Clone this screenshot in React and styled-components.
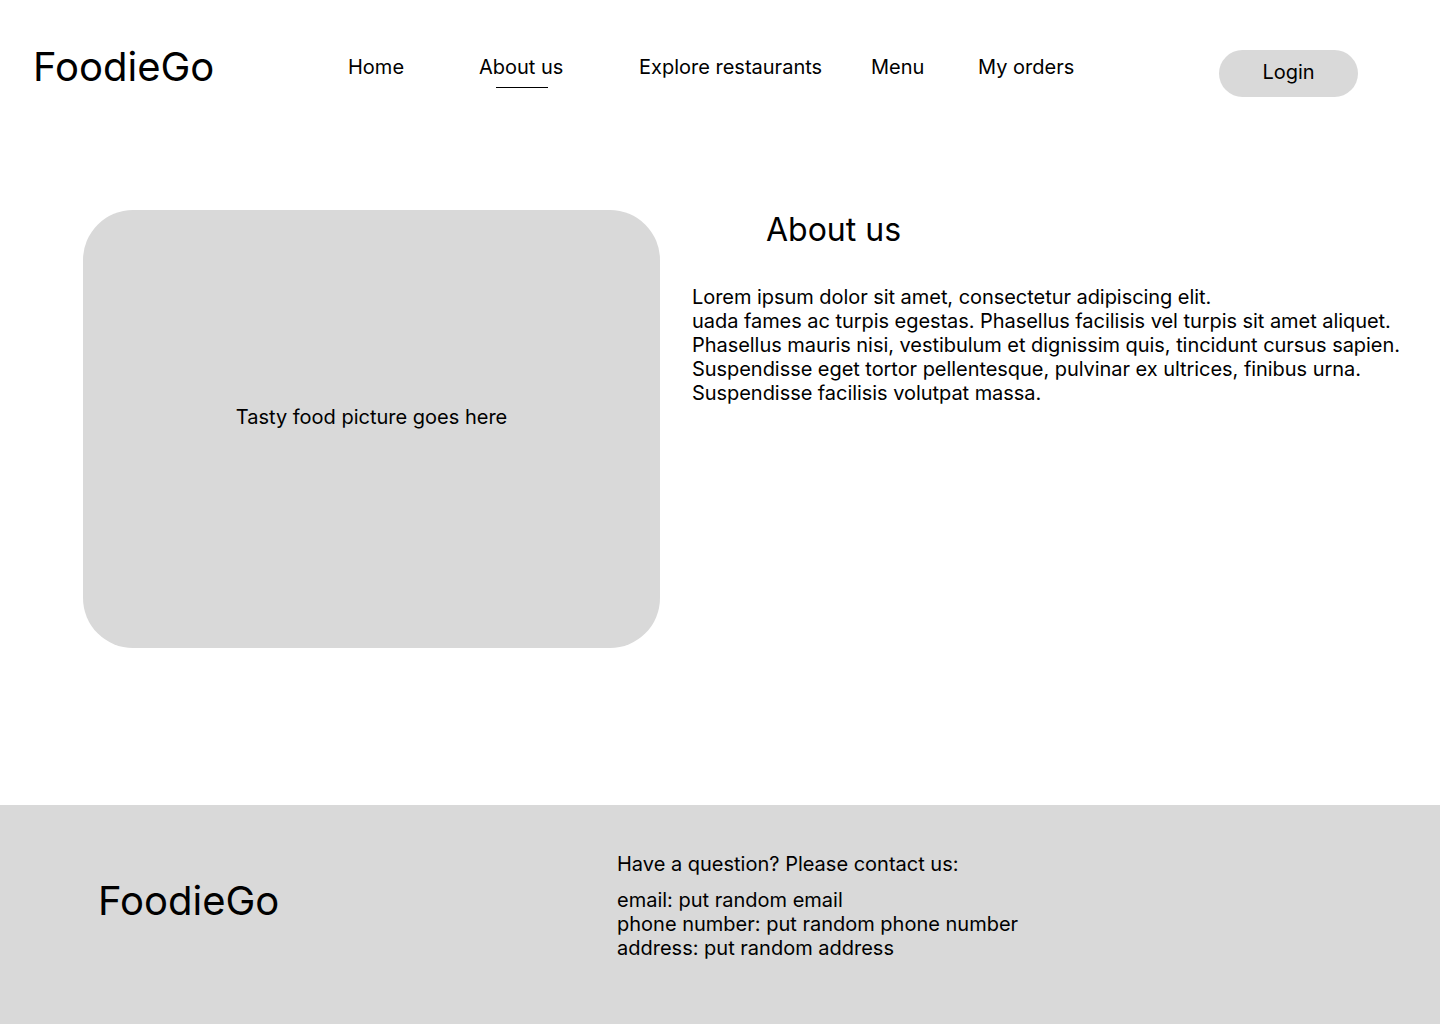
import React from 'react';
import styled, { createGlobalStyle } from 'styled-components';

const GlobalStyle = createGlobalStyle`
    body {
        margin: 0;
        background: #ffffff;
        font-family: Inter, "Noto Sans", sans-serif;
        color: #000000;
    }
`;

const navLinks = [
    { label: "Home", width: 131 },
    { label: "About us", width: 160, active: true },
    { label: "Explore restaurants", width: 232 },
    { label: "Menu", width: 107 },
    { label: "My orders", width: 241 },
];

export default function App() {
    return (
        <Page>
            <GlobalStyle />
            <Header>
                <Logo>FoodieGo</Logo>
                <Nav>
                    {navLinks.map((link) => (
                        <NavItem key={link.label} $w={link.width}>
                            <NavLink $active={link.active}>{link.label}</NavLink>
                        </NavItem>
                    ))}
                </Nav>
                <LoginButton>Login</LoginButton>
            </Header>
            <Main>
                <Picture>Tasty food picture goes here</Picture>
                <AboutColumn>
                    <Heading>About us</Heading>
                    <Paragraph>
                        Lorem ipsum dolor sit amet, consectetur adipiscing elit.<br />
                        uada fames ac turpis egestas. Phasellus facilisis vel turpis sit amet aliquet.<br />
                        Phasellus mauris nisi, vestibulum et dignissim quis, tincidunt cursus sapien.<br />
                        Suspendisse eget tortor pellentesque, pulvinar ex ultrices, finibus urna.<br />
                        Suspendisse facilisis volutpat massa.
                    </Paragraph>
                </AboutColumn>
            </Main>
            <Footer>
                <FooterLogo>FoodieGo</FooterLogo>
                <Contact>
                    <ContactTitle>Have a question? Please contact us:</ContactTitle>
                    <ContactLines>
                        email: put random email<br />
                        phone number: put random phone number<br />
                        address: put random address
                    </ContactLines>
                </Contact>
            </Footer>
        </Page>
    );
};

const Page = styled.div`
    width: 1440px;
    min-height: 1024px;
    display: flex;
    flex-direction: column;
`;

const Header = styled.header`
    display: flex;
    align-items: flex-start;
    height: 134px;
    padding: 43px 0 0 33px;
    box-sizing: border-box;
`;

const Logo = styled.div`
    font-size: 40px;
    line-height: 48px;
    width: 315px;
`;

const Nav = styled.nav`
    display: flex;
    margin-top: 12px;
`;

const NavItem = styled.div`
    width: ${(p) => p.$w}px;
`;

const NavLink = styled.span`
    position: relative;
    display: inline-block;
    font-size: 20px;
    line-height: 24px;
    &::after {
        content: "";
        display: ${(p) => (p.$active ? 'block' : 'none')};
        position: absolute;
        left: 50%;
        top: 32px;
        width: 52px;
        height: 1px;
        margin-left: -25px;
        background: #000000;
    }
`;

const LoginButton = styled.button`
    margin-top: 7px;
    width: 139px;
    height: 47px;
    border: none;
    border-radius: 24px;
    background: #d9d9d9;
    font-family: Inter, sans-serif;
    font-size: 20px;
    line-height: 24px;
    color: #000000;
    padding: 0 0 3px;
`;

const Main = styled.main`
    display: flex;
    gap: 32px;
    padding: 76px 0 0 83px;
    height: 671px;
    box-sizing: border-box;
`;

const Picture = styled.div`
    width: 577px;
    height: 438px;
    border-radius: 50px;
    background: #d9d9d9;
    display: flex;
    align-items: center;
    justify-content: center;
    font-size: 20px;
    line-height: 24px;
    padding-bottom: 24px;
    box-sizing: border-box;
    flex-shrink: 0;
`;

const AboutColumn = styled.section`
    display: flex;
    flex-direction: column;
`;

const Heading = styled.h1`
    margin: 0 0 35px 74px;
    font-size: 32px;
    line-height: 40px;
    font-weight: 400;
`;

const Paragraph = styled.p`
    margin: 0;
    font-size: 20px;
    line-height: 24px;
    letter-spacing: -0.05px;
    white-space: nowrap;
`;

const Footer = styled.footer`
    display: flex;
    align-items: flex-start;
    height: 219px;
    background: #d9d9d9;
    padding-left: 98px;
    box-sizing: border-box;
`;

const FooterLogo = styled.div`
    font-size: 40px;
    line-height: 48px;
    width: 519px;
    margin-top: 72px;
`;

const Contact = styled.div`
    display: flex;
    flex-direction: column;
    gap: 12px;
    margin-top: 47px;
    font-size: 20px;
    line-height: 24px;
`;

const ContactTitle = styled.div``;

const ContactLines = styled.div``;
